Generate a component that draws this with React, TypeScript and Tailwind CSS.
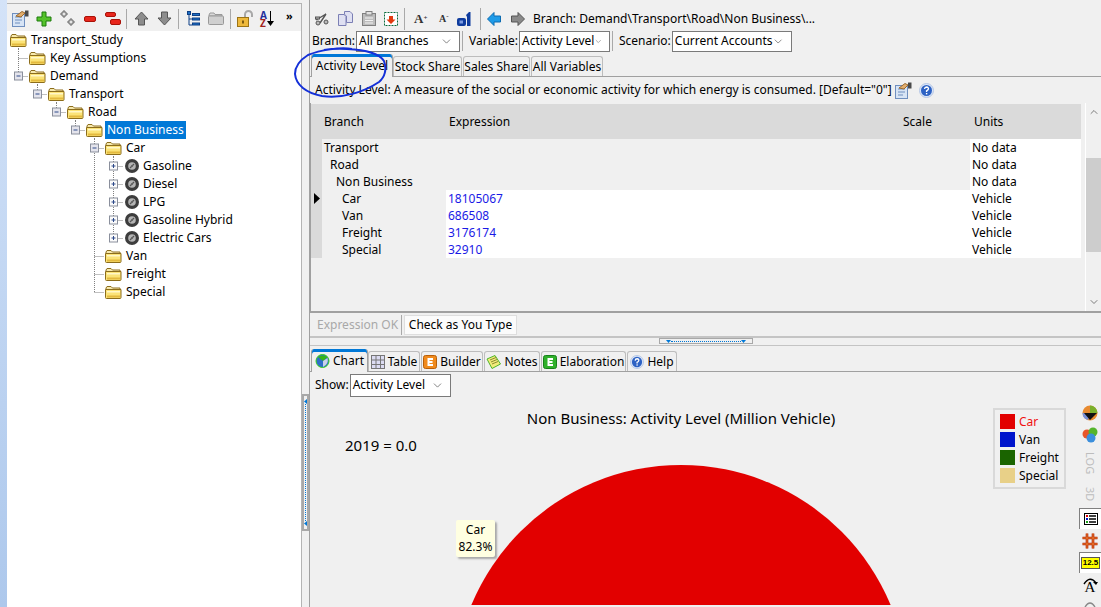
import React from "react";
import { ChevronDown, ChevronUp } from "lucide-react";

const font = "font-['Noto_Sans','Liberation_Sans',sans-serif]";

type Row = {
  level: number;
  label: string;
  icon?: "folder" | "tire";
  toggle?: "minus" | "plus";
  pass?: number[];
  own?: "through" | "end";
  down?: boolean;
  selected?: boolean;
};

const treeRows: Row[] = [
  { level: 0, label: "Transport_Study", down: true },
  { level: 1, label: "Key Assumptions", own: "through" },
  { level: 1, label: "Demand", own: "end", toggle: "minus", down: true },
  { level: 2, label: "Transport", own: "end", toggle: "minus", down: true },
  { level: 3, label: "Road", own: "end", toggle: "minus", down: true },
  { level: 4, label: "Non Business", own: "end", toggle: "minus", down: true, selected: true },
  { level: 5, label: "Car", own: "through", toggle: "minus", down: true },
  { level: 6, label: "Gasoline", icon: "tire", own: "through", toggle: "plus", pass: [94] },
  { level: 6, label: "Diesel", icon: "tire", own: "through", toggle: "plus", pass: [94] },
  { level: 6, label: "LPG", icon: "tire", own: "through", toggle: "plus", pass: [94] },
  { level: 6, label: "Gasoline Hybrid", icon: "tire", own: "through", toggle: "plus", pass: [94] },
  { level: 6, label: "Electric Cars", icon: "tire", own: "end", toggle: "plus", pass: [94] },
  { level: 5, label: "Van", own: "through" },
  { level: 5, label: "Freight", own: "through" },
  { level: 5, label: "Special", own: "end" },
];

function FolderIcon() {
  return (
    <svg width="17" height="14" viewBox="0 0 17 14" className="shrink-0">
      <path d="M1 3 L2 1.5 H6 L7.5 3 H15 V4.5 H1 Z" fill="#f6e9ae" stroke="#8c6d1c" />
      <path d="M0.5 4.5 H16 V12.5 Q16 13.5 15 13.5 H1.5 Q0.5 13.5 0.5 12.5 Z" fill="#fbe377" stroke="#8c6d1c" />
      <rect x="2" y="6" width="13" height="1.5" fill="#fff7c8" />
      <rect x="2" y="10.5" width="13" height="2" fill="#e3b93f" />
    </svg>
  );
}

function TireIcon() {
  return (
    <svg width="14" height="14" viewBox="0 0 14 14" className="shrink-0">
      <circle cx="7" cy="7" r="7" fill="#3d3d3d" />
      <circle cx="7" cy="7" r="3.8" fill="#b4b4b4" />
      <path d="M5 9 L9 5" stroke="#555" strokeWidth="1.2" />
      <circle cx="7" cy="7" r="1" fill="#666" />
    </svg>
  );
}

function TreeGuides({ row }: { row: Row }) {
  const width = row.level === 0 ? 3 : row.level === 6 ? 118 : 22 + 19 * (row.level - 1);
  const cx = 11.5 + 19 * (row.level - 1);
  const dots = { stroke: "#808080", strokeDasharray: "1 1" };
  return (
    <svg width={width} height="18" className="shrink-0 overflow-visible">
      {row.pass?.map((x) => (
        <line key={x} x1={x - 6.5} x2={x - 6.5} y1="0" y2="18" {...dots} />
      ))}
      {row.own && <line x1={cx} x2={cx} y1="0" y2={row.own === "through" ? 18 : 9} {...dots} />}
      {row.own && <line x1={cx} x2={cx + 10} y1="9.5" y2="9.5" {...dots} />}
      {row.down && <line x1={cx + 19} x2={cx + 19} y1="9" y2="18" {...dots} />}
      {row.toggle && (
        <g>
          <rect x={cx - 4} y="5" width="8" height="8" fill={row.toggle === "plus" ? "#fbfbfb" : "#e4e4ec"} stroke="#8a8f9c" />
          <line x1={cx - 2} x2={cx + 2} y1="9" y2="9" stroke="#2e4a8a" />
          {row.toggle === "plus" && <line x1={cx} x2={cx} y1="7" y2="11" stroke="#2e4a8a" />}
        </g>
      )}
    </svg>
  );
}

function TreeRow({ row }: { row: Row }) {
  return (
    <div className="flex h-[18px] items-center">
      <TreeGuides row={row} />
      {row.icon === "tire" ? <TireIcon /> : <FolderIcon />}
      <span
        className={`ml-[2px] px-[2px] leading-[18px] whitespace-nowrap ${
          row.selected ? "bg-[#0078d7] text-white" : "text-black"
        }`}
      >
        {row.label}
      </span>
    </div>
  );
}

function Sep({ h = "h-[20px]" }: { h?: string }) {
  return <div className={`w-[1px] bg-[#a9a9a9] ${h} shrink-0`} />;
}

function LeftToolbar() {
  return (
    <div className="flex h-[27px] items-center pl-[5px] pr-[5px] pt-[2px]">
      <NoteHand />
      <svg width="16" height="16" viewBox="0 0 16 16" className="ml-[7px]">
        <path d="M6 1 H10 V6 H15 V10 H10 V15 H6 V10 H1 V6 H6 Z" fill="#55c22b" stroke="#1d7a0c" />
      </svg>
      <svg width="17" height="17" viewBox="0 0 17 17" className="ml-[7px]" fill="#e6e6e6" stroke="#666">
        <path d="M4 1 H6 V3 H8 V5 H6 V7 H4 V5 H2 V3 H4 Z" />
        <path d="M11 9 H13 V11 H15 V13 H13 V15 H11 V13 H9 V11 H11 Z" />
      </svg>
      <svg width="12" height="6" viewBox="0 0 12 6" className="ml-[8px]">
        <rect x="0.5" y="0.5" width="11" height="5" rx="1.5" fill="#e8261c" stroke="#a81208" />
      </svg>
      <svg width="16" height="13" viewBox="0 0 16 13" className="ml-[9px]">
        <rect x="0.5" y="0.5" width="10" height="4" rx="1.5" fill="#e8261c" stroke="#a81208" />
        <rect x="5.5" y="7.5" width="10" height="5" rx="1.5" fill="#e8261c" stroke="#a81208" />
      </svg>
      <div className="ml-[5px]"><Sep /></div>
      <svg width="15" height="15" viewBox="0 0 15 15" className="ml-[7px]">
        <path d="M7.5 1 L14 8 H10.5 V14 H4.5 V8 H1 Z" fill="#8d8d8d" stroke="#555" />
      </svg>
      <svg width="15" height="15" viewBox="0 0 15 15" className="ml-[8px]">
        <path d="M7.5 14 L14 7 H10.5 V1 H4.5 V7 H1 Z" fill="#8d8d8d" stroke="#555" />
      </svg>
      <div className="ml-[6px]"><Sep /></div>
      <svg width="13" height="16" viewBox="0 0 13 16" className="ml-[8px]" fill="#1d6fc4" stroke="#0d3f86">
        <path d="M2 3 V14 H5 M2 8 H5" fill="none" />
        <rect x="0.5" y="0.5" width="3" height="3" />
        <rect x="5.5" y="2.5" width="7" height="2" />
        <rect x="5.5" y="7" width="7" height="2" />
        <rect x="5.5" y="12" width="7" height="2" />
      </svg>
      <svg width="16" height="13" viewBox="0 0 16 13" className="ml-[8px]">
        <path d="M1 3 L2 1 H6 L7 2.5 H14 V4 H1 Z" fill="#d8d8d8" stroke="#999" />
        <rect x="0.5" y="4" width="15" height="8.5" rx="1" fill="#cfcfcf" stroke="#999" />
      </svg>
      <div className="ml-[6px]"><Sep /></div>
      <svg width="17" height="17" viewBox="0 0 17 17" className="ml-[6px]">
        <path d="M8 8 V4.5 A3.5 3.5 0 0 1 15 4.5 V7" fill="none" stroke="#a8a8a8" strokeWidth="2" />
        <rect x="0.5" y="7.5" width="11" height="9" fill="#eeb93c" stroke="#9c7416" />
        <rect x="5" y="10.5" width="2" height="3" fill="#7c5a10" />
      </svg>
      <div className="ml-[6px] flex items-center">
        <div className={`flex flex-col text-[10px] leading-[8px] font-bold ${font}`}>
          <span className="text-[#1f2f9c]">A</span>
          <span className="text-[#a0201c]">Z</span>
        </div>
        <svg width="7" height="16" viewBox="0 0 7 16">
          <path d="M3.5 0 V11" stroke="#000" />
          <path d="M0 10 H7 L3.5 15 Z" fill="#000" />
        </svg>
      </div>
      <span className="ml-[12px] -mt-[7px] text-[11px] leading-none font-bold">»</span>
    </div>
  );
}

function NoteHand() {
  return (
    <svg width="17" height="17" viewBox="0 0 17 17" className="shrink-0">
      <rect x="0.5" y="3.5" width="12" height="13" fill="#d7e4f5" stroke="#6f8fbf" />
      <path d="M3 7 H10 M3 10 H10 M3 13 H8" stroke="#6f8fbf" />
      <path d="M4 6 L10 1.5 L13 3 L9 7 Z" fill="#e2ad6d" stroke="#9b6a2e" />
      <rect x="13" y="0.5" width="3.5" height="6" fill="#4a4a4a" />
    </svg>
  );
}

function EditToolbar() {
  return (
    <div className="flex h-[24px] items-center pl-[5px] pt-[1px]">
      <svg width="15" height="15" viewBox="0 0 15 15" className="shrink-0" stroke="#555" fill="#bbb">
        <path d="M1 9 L11 3 M5 12 L11 3" fill="none" strokeWidth="1.4" />
        <circle cx="3" cy="12" r="2" />
        <circle cx="11" cy="11" r="2" />
        <rect x="0.5" y="6" width="4" height="2" />
      </svg>
      <svg width="15" height="15" viewBox="0 0 15 15" className="ml-[8px]" fill="#dfe0f2" stroke="#7b7fb4">
        <path d="M0.5 3.5 H6 L8 5.5 V14.5 H0.5 Z" />
        <path d="M6.5 0.5 H12 L14.5 3 V11.5 H8.5 V5 L6.5 3.5 Z" />
      </svg>
      <svg width="14" height="15" viewBox="0 0 14 15" className="ml-[9px]">
        <rect x="0.5" y="2.5" width="13" height="12" fill="#bdbdbd" stroke="#808080" />
        <rect x="4" y="0.5" width="6" height="3.5" fill="#e2e2e2" stroke="#808080" />
        <path d="M3 7 H11 M3 9.5 H11 M3 12 H11" stroke="#f2f2f2" />
      </svg>
      <svg width="14" height="14" viewBox="0 0 14 14" className="ml-[8px]">
        <rect x="0.5" y="0.5" width="13" height="13" fill="#fff" stroke="#0b6a3c" strokeDasharray="2 1" />
        <path d="M5 4 H9 V7.5 H11.5 L7 12 L2.5 7.5 H5 Z" fill="#e23a10" />
      </svg>
      <div className="ml-[6px]"><Sep h="h-[22px]" /></div>
      <span className="ml-[9px] w-[12px] font-['Liberation_Serif',serif] text-[13px] leading-none font-bold text-[#333]">
        A<sup className="text-[7px]">+</sup>
      </span>
      <span className="ml-[13px] w-[10px] font-['Liberation_Serif',serif] text-[10px] leading-none font-bold text-[#333]">
        A<sup className="text-[7px]">-</sup>
      </span>
      <svg width="15" height="14" viewBox="0 0 15 14" className="ml-[8px]">
        <rect x="0" y="6" width="9" height="8" rx="2" fill="#0f3c9e" />
        <rect x="2.5" y="8.5" width="3.5" height="3" fill="#7d9be0" />
        <path d="M9 3 L12 0 H13.5 V14 H10 V5 Z" fill="#0f3c9e" />
      </svg>
      <div className="ml-[8px]"><Sep h="h-[22px]" /></div>
      <svg width="14" height="14" viewBox="0 0 14 14" className="ml-[6px]">
        <path d="M0.5 7 L7 0.5 V4 H13.5 V10 H7 V13.5 Z" fill="#1e9be8" stroke="#0d6bb0" />
      </svg>
      <svg width="14" height="14" viewBox="0 0 14 14" className="ml-[10px]">
        <path d="M13.5 7 L7 0.5 V4 H0.5 V10 H7 V13.5 Z" fill="#8a8a8a" stroke="#555" />
      </svg>
      <span className="ml-[8px] whitespace-nowrap">Branch: Demand\Transport\Road\Non Business\...</span>
    </div>
  );
}

function Dropdown({ value, className }: { value: string; className: string }) {
  return (
    <div className={`flex h-[21px] items-center justify-between border border-[#7a7a7a] bg-white pl-[2px] pr-[6px] ${className}`}>
      <span className="whitespace-nowrap">{value}</span>
      <ChevronDown size={13} strokeWidth={1.2} color="#444" />
    </div>
  );
}

function FilterBar() {
  return (
    <div className="flex h-[22px] items-center pl-[2px]">
      <span>Branch:</span>
      <Dropdown value="All Branches" className="ml-[1px] w-[104px]" />
      <div className="ml-[2px]"><Sep /></div>
      <span className="ml-[6px]">Variable:</span>
      <Dropdown value="Activity Level" className="ml-[1px] w-[91px]" />
      <div className="ml-[2px]"><Sep /></div>
      <span className="ml-[6px]">Scenario:</span>
      <Dropdown value="Current Accounts" className="ml-[1px] w-[120px]" />
    </div>
  );
}

function Tab({ label, active, icon, className }: { label: string; active?: boolean; icon?: React.ReactNode; className: string }) {
  return (
    <div
      className={`flex items-center justify-center gap-[3px] rounded-t-[3px] border border-b-0 whitespace-nowrap ${className} ${
        active
          ? "-mb-[1px] h-[23px] self-end border-x-[#a0a0a0] border-t-0 border-t-[#0078d7] bg-[#f0f0f0] shadow-[inset_0_3px_0_#0078d7]"
          : "h-[20px] self-end border-[#bdbdbd] bg-[#f0f0f0]"
      }`}
    >
      {icon}
      <span>{label}</span>
    </div>
  );
}

const gridRows = [
  { branch: "Transport", pad: "pl-[2px]", units: "No data" },
  { branch: "Road", pad: "pl-[8px]", units: "No data" },
  { branch: "Non Business", pad: "pl-[14px]", units: "No data" },
  { branch: "Car", pad: "pl-[20px]", expr: "18105067", units: "Vehicle", current: true },
  { branch: "Van", pad: "pl-[20px]", expr: "686508", units: "Vehicle" },
  { branch: "Freight", pad: "pl-[20px]", expr: "3176174", units: "Vehicle" },
  { branch: "Special", pad: "pl-[20px]", expr: "32910", units: "Vehicle" },
];

function DataGrid() {
  return (
    <div className="flex h-[210px] border-b-2 border-l border-[#a0a0a0]">
      <div className="w-[772px] pt-[1px]">
        <div className="grid h-[35px] grid-cols-[124px_454px_70px_1fr] items-center bg-[#dadada] pl-[13px]">
          <span>Branch</span>
          <span className="pl-[1px]">Expression</span>
          <span className="pl-[1px]">Scale</span>
          <span className="pl-[2px]">Units</span>
        </div>
        {gridRows.map((r) => (
          <div key={r.branch} className="flex h-[17px] leading-[17px]">
            <div className="flex w-[11px] items-center bg-[#dadada] pl-[3px]">
              {r.current && (
                <svg width="6" height="11" viewBox="0 0 6 11">
                  <path d="M0 0 L6 5.5 L0 11 Z" fill="#000" />
                </svg>
              )}
            </div>
            <div className={`w-[124px] ${r.pad}`}>{r.branch}</div>
            <div className={`w-[524px] pl-[2px] text-[#1a1ae6] ${r.expr ? "bg-white" : ""}`}>{r.expr}</div>
            <div className="flex-1 bg-white pl-[2px]">{r.units}</div>
          </div>
        ))}
      </div>
      <div className="ml-[4px] flex w-[16px] flex-col items-center border-l border-white">
        <ChevronUp size={12} strokeWidth={1.5} color="#555" className="mt-[3px] h-[12px]" />
        <div className="mt-[40px] h-[94px] w-full bg-[#cdcdcd]" />
        <div className="flex-1" />
        <ChevronDown size={12} strokeWidth={1.5} color="#555" className="mb-[3px]" />
      </div>
    </div>
  );
}

function SplitArrow({ dir }: { dir: "down" | "left" }) {
  return (
    <svg width="5" height="5" viewBox="0 0 5 5" className="shrink-0">
      <path d={dir === "down" ? "M0 1 H5 L2.5 4 Z" : "M4 0 V5 L1 2.5 Z"} fill="#0078d7" />
    </svg>
  );
}

function ChartIcon() {
  return (
    <svg width="15" height="14" viewBox="0 0 15 14">
      <circle cx="7.5" cy="7" r="6.5" fill="#2f6fc8" stroke="#34d018" />
      <path d="M3 3 Q7.5 0 12.5 3 L8 7 Z" fill="#34b518" />
      <path d="M8 7 L12.5 4 Q14 10 8 13 Z" fill="#c9d2ea" />
    </svg>
  );
}

function TableIcon() {
  return (
    <svg width="14" height="14" viewBox="0 0 14 14">
      <rect x="0.5" y="0.5" width="13" height="13" fill="#dcdcf2" stroke="#777" />
      <path d="M5 0.5 V13.5 M9.5 0.5 V13.5 M0.5 5 H13.5 M0.5 9.5 H13.5" stroke="#777" />
    </svg>
  );
}

function LetterTile({ fill, stroke }: { fill: string; stroke: string }) {
  return (
    <svg width="14" height="14" viewBox="0 0 14 14">
      <rect x="0.5" y="0.5" width="13" height="13" rx="2" fill={fill} stroke={stroke} />
      <path d="M4.5 3 H10 V5 H6.5 V6 H9.5 V8 H6.5 V9 H10 V11 H4.5 Z" fill="#fff" />
    </svg>
  );
}

function NotesIcon() {
  return (
    <svg width="15" height="14" viewBox="0 0 15 14">
      <path d="M1 4 L9 0.5 L14.5 9 L6 13.5 Z" fill="#f3ec7a" stroke="#4fb52b" />
      <path d="M4 5 L10 2.5 M5 7 L11 4.5 M6 9 L12 6.5" stroke="#8a8a30" />
    </svg>
  );
}

function HelpIcon({ size = 15 }: { size?: number }) {
  return (
    <svg width={size} height={size} viewBox="0 0 15 15" className="shrink-0">
      <circle cx="7.5" cy="7.5" r="7" fill="#dbe6f7" stroke="#b6c7e6" />
      <circle cx="7.5" cy="7.5" r="5.5" fill="#2d62c4" />
      <path d="M5.5 6 Q5.8 4 7.6 4 Q9.6 4.2 9.4 6 Q9 7.2 7.6 7.8 V9" fill="none" stroke="#fff" strokeWidth="1.4" />
      <rect x="6.9" y="10" width="1.4" height="1.4" fill="#fff" />
    </svg>
  );
}

const legend = [
  { label: "Car", color: "bg-[#e20000]", text: "text-[#f01010]" },
  { label: "Van", color: "bg-[#0014cc]", text: "" },
  { label: "Freight", color: "bg-[#1a6400]", text: "" },
  { label: "Special", color: "bg-[#e8d088]", text: "" },
];

function ChartCanvas() {
  return (
    <div className="relative min-w-0 flex-1 overflow-hidden">
      <div className="pt-[10px] pr-[27px] text-center text-[15px] leading-[20px]">Non Business: Activity Level (Million Vehicle)</div>
      <div className="absolute top-[37px] left-[35px] text-[15px] leading-[20px]">2019 = 0.0</div>
      <svg width="454" height="140" viewBox="0 0 454 140" className="absolute top-[67px] left-[144px]">
        <circle cx="227" cy="227" r="227" fill="#e20000" />
      </svg>
      <div className="absolute top-[122px] left-[146px] flex h-[37px] w-[39px] flex-col items-center rounded-[2px] bg-[#ffffe1] leading-[17px] shadow-[2px_2px_2px_#a8a8a8]">
        <span className="mt-[1px]">Car</span>
        <span>82.3%</span>
      </div>
      <div className="absolute top-[10px] left-[683px] flex h-[81px] w-[73px] flex-col gap-[3px] border-2 border-[#d9d9d9] px-[5px] py-[4px]">
        {legend.map((l) => (
          <div key={l.label} className="flex h-[15px] items-center gap-[4px]">
            <div className={`h-[15px] w-[15px] shrink-0 ${l.color}`} />
            <span className={`leading-none ${l.text}`}>{l.label}</span>
          </div>
        ))}
      </div>
    </div>
  );
}

function ChartTools() {
  return (
    <div className="flex w-[22px] shrink-0 flex-col items-center pt-[7px]">
      <svg width="16" height="16" viewBox="0 0 16 16">
        <circle cx="8" cy="8" r="7.5" fill="#e88a30" />
        <path d="M8 8 V0.5 A7.5 7.5 0 0 1 15.5 8 Z" fill="#7ab02c" />
        <path d="M8 8 L0.5 8 A7.5 7.5 0 0 0 6 15 Z" fill="#7a90d8" />
        <path d="M2 8 H15 L8 15 Z" fill="#111" />
      </svg>
      <svg width="16" height="16" viewBox="0 0 16 16" className="mt-[6px]">
        <circle cx="5" cy="7" r="4.5" fill="#e8562a" />
        <circle cx="11" cy="5" r="4.5" fill="#55b52b" />
        <circle cx="9" cy="11" r="4.5" fill="#3b8fdc" />
      </svg>
      <span className="mt-[9px] h-[23px] text-[11px] leading-[14px] text-[#bdbdbd] [writing-mode:vertical-rl]">LOG</span>
      <span className="mt-[12px] h-[15px] text-[11px] leading-[14px] text-[#bdbdbd] [writing-mode:vertical-rl]">3D</span>
      <div className="mt-[6px] flex h-[21px] w-[22px] items-center justify-center border-t border-l border-[#808080] bg-white">
        <svg width="14" height="12" viewBox="0 0 14 12">
          <rect x="0.5" y="0.5" width="13" height="11" fill="#fff" stroke="#000" />
          <rect x="2" y="2" width="2" height="2" fill="#e20000" />
          <rect x="2" y="5" width="2" height="2" fill="#0014cc" />
          <rect x="2" y="8" width="2" height="2" fill="#18a018" />
          <path d="M5 3 H12 M5 6 H12 M5 9 H12" stroke="#000" strokeWidth="1.4" />
        </svg>
      </div>
      <svg width="16" height="16" viewBox="0 0 16 16" className="mt-[4px]">
        <path d="M5 0.5 V15.5 M11 0.5 V15.5 M0.5 5 H15.5 M0.5 11 H15.5" stroke="#b02000" strokeWidth="2.6" />
        <path d="M5 0.5 V15.5 M11 0.5 V15.5 M0.5 5 H15.5 M0.5 11 H15.5" stroke="#f08030" strokeWidth="1" />
      </svg>
      <div className="mt-[3px] flex h-[21px] w-[22px] items-center justify-center border-t border-l border-[#808080] bg-white">
        <div className="flex h-[10px] w-[17px] items-center justify-center bg-[#ffff00] font-['Liberation_Sans',sans-serif] text-[8px] leading-none font-bold outline-1 outline-[#555]">12.5</div>
      </div>
      <div className="relative mt-[4px] h-[17px] w-[16px] text-center font-['Liberation_Serif',serif] text-[15px] leading-[20px]">
        A
        <svg width="16" height="8" viewBox="0 0 16 8" className="absolute top-0 left-0">
          <path d="M2 7 Q8 -2 14 6" fill="none" stroke="#000" strokeWidth="1.4" />
          <path d="M11 5 H16 L14 8 Z" fill="#000" />
        </svg>
      </div>
      <svg width="14" height="8" viewBox="0 0 14 8" className="mt-[5px]">
        <path d="M2 8 Q7 0 12 8" fill="none" stroke="#888" strokeWidth="1.4" />
      </svg>
    </div>
  );
}

export default function App() {
  return (
    <div className={`relative flex h-[607px] w-[1101px] overflow-hidden bg-[#f0f0f0] text-[12px] leading-[16px] text-black ${font}`}>
      <div className="w-[7px] shrink-0 bg-gradient-to-b from-[#d4e3f8] to-[#adc8ec]" />

      {/* tree */}
      <div className="mt-[3px] flex w-[295px] shrink-0 flex-col border-t border-r border-[#b4b4b4]">
        <LeftToolbar />
        <div className="flex-1 bg-white">
          {treeRows.map((r) => (
            <TreeRow key={r.label} row={r} />
          ))}
        </div>
      </div>

      {/* splitter */}
      <div className="flex w-[7px] shrink-0 flex-col pt-[394px]">
        <div className="flex h-[137px] flex-col items-center justify-between border-2 border-l-[#a8a8a8] border-[#a8a8a8] py-[3px]">
          <SplitArrow dir="left" />
          <div className="w-0 flex-1 border-l border-dotted border-[#0078d7]" />
          <SplitArrow dir="left" />
        </div>
      </div>

      {/* main */}
      <div className="flex min-w-0 flex-1 flex-col border-l border-[#a0a0a0]">
        <div className="h-[6px]" />
        <EditToolbar />
        <FilterBar />
        <div className="mt-[2px] flex h-[23px] items-end border-b border-[#a0a0a0] pl-[1px]">
          <Tab label="Activity Level" active className="w-[82px]" />
          <Tab label="Stock Share" className="w-[69px]" />
          <Tab label="Sales Share" className="ml-[1px] w-[67px]" />
          <Tab label="All Variables" className="ml-[1px] w-[72px]" />
        </div>
        <div className="flex h-[26px] items-center pl-[5px]">
          <span className="whitespace-nowrap">Activity Level: A measure of the social or economic activity for which energy is consumed. [Default="0"]</span>
          <div className="ml-[3px]"><NoteHand /></div>
          <div className="ml-[7px]"><HelpIcon /></div>
        </div>
        <DataGrid />
        <div className="flex h-[25px] items-center border-b-2 border-[#c4c4c4] pl-[7px]">
          <span className="w-[84px] text-[#a8a8a8]">Expression OK</span>
          <Sep />
          <div className="ml-[2px] flex h-[20px] w-[113px] items-center justify-center border border-[#dedede] bg-[#fbfbfb]">Check as You Type</div>
        </div>
        <div className="flex h-[8px] justify-start border-b border-[#c4c4c4] pl-[349px]">
          <div className="flex h-[6px] w-[94px] items-center justify-between border border-[#a8a8a8] px-[6px]">
            <SplitArrow dir="down" />
            <div className="h-0 flex-1 border-t border-dotted border-[#0078d7]" />
            <SplitArrow dir="down" />
          </div>
        </div>
        <div className="mt-[2px] flex h-[24px] items-end border-b border-[#a0a0a0] pl-[1px]">
          <Tab label="Chart" active icon={<ChartIcon />} className="w-[57px]" />
          <Tab label="Table" icon={<TableIcon />} className="w-[52px]" />
          <Tab label="Builder" icon={<LetterTile fill="#f08a1c" stroke="#b85f08" />} className="ml-[1px] w-[62px]" />
          <Tab label="Notes" icon={<NotesIcon />} className="ml-[1px] w-[56px]" />
          <Tab label="Elaboration" icon={<LetterTile fill="#2fb02a" stroke="#17801a" />} className="ml-[1px] w-[85px]" />
          <Tab label="Help" icon={<HelpIcon size={14} />} className="ml-[1px] w-[50px]" />
        </div>
        <div className="flex h-[26px] items-center pl-[5px]">
          <span>Show:</span>
          <Dropdown value="Activity Level" className="ml-[1px] h-[23px] w-[101px]" />
        </div>
        <div className="flex min-h-0 flex-1">
          <ChartCanvas />
          <ChartTools />
        </div>
      </div>

      {/* hand-drawn marker circle on the screenshot */}
      <svg width="100" height="56" viewBox="0 0 100 56" className="pointer-events-none absolute top-[47px] left-[292px]">
        <path
          d="M60 2 C 48 0 28 3 16 8 C 8 13 3 20 3 27 C 4 38 14 46 30 49 C 50 52 72 45 87 35 C 93 30 95 22 92 14 C 87 6 75 3 55 2 C 45 1.500 38 2 32 3"
          fill="none"
          stroke="#1430d8"
          strokeWidth="2"
        />
      </svg>
    </div>
  );
}
